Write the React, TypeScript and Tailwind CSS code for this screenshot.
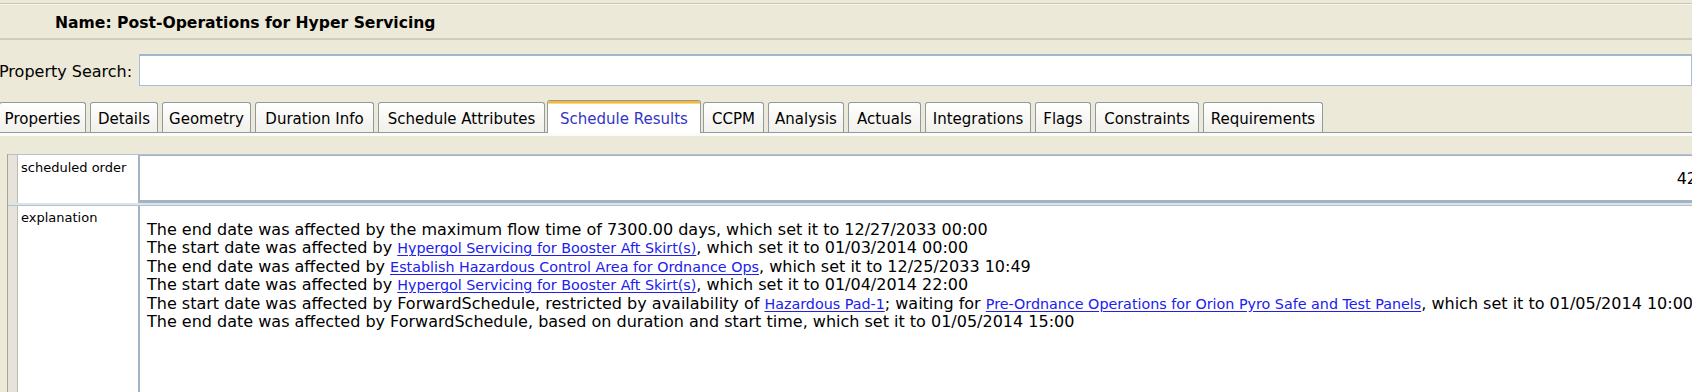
const tabs = [
  { label: "Properties", w: "w-[87px]" },
  { label: "Details", w: "w-[68px]" },
  { label: "Geometry", w: "w-[89px]" },
  { label: "Duration Info", w: "w-[119px]" },
  { label: "Schedule Attributes", w: "w-[167px]" },
  { label: "Schedule Results", w: "w-[154px]", active: true },
  { label: "CCPM", w: "w-[61px]" },
  { label: "Analysis", w: "w-[76px]" },
  { label: "Actuals", w: "w-[73px]" },
  { label: "Integrations", w: "w-[106px]" },
  { label: "Flags", w: "w-[56px]" },
  { label: "Constraints", w: "w-[104px]" },
  { label: "Requirements", w: "w-[120px]" },
]

function Link({ children }: { children: React.ReactNode }) {
  return <span className="text-[#2020ee] text-[14.3px] underline underline-offset-2">{children}</span>
}

function Tab({ label, w, active }: { label: string; w: string; active?: boolean }) {
  if (active) {
    return (
      <div
        className={`${w} -mx-[2px] h-[33px] -mb-[1px] relative z-10 flex flex-col bg-white border border-b-0 border-[#919b9c] rounded-t-[3px]`}
      >
        <div className="h-[3px] rounded-t-[2px] bg-[#f3b645] border-b border-[#ffd77a]" />
        <div className="flex-1 flex items-center justify-center pt-[2px] text-[#3434c8]">{label}</div>
      </div>
    )
  }
  return (
    <div
      className={`${w} h-[30px] flex items-center justify-center pt-[4px] bg-gradient-to-b from-white to-[#f1f0ea] border border-b-0 border-[#919b9c] rounded-t-[3px]`}
    >
      {label}
    </div>
  )
}

export default function App() {
  return (
    <div className="w-[1692px] h-[392px] overflow-hidden bg-[#ece9d8] text-black font-['DejaVu_Sans',sans-serif] text-[15px]">
      {/* title */}
      <div className="pt-[3px]">
        <div className="h-[37px] border-t border-[#c9c6b6] border-b-2 border-b-[#cfccbd] shadow-[inset_0_1px_0_#f6f5ef] flex items-center pl-[55px] pt-[6px] font-bold text-[15.6px]">
          Name: Post-Operations for Hyper Servicing
        </div>
      </div>

      {/* search */}
      <div className="mt-[14px] h-[32px] flex items-center">
        <span className="w-[140px] shrink-0 -ml-[1px] pt-[3px] text-[16px]">Property Search:</span>
        <div className="flex-1 h-full bg-white border border-[#a9bdd2] border-t-2 border-t-[#9fb6cd]" />
      </div>

      {/* tabs */}
      <div className="mt-[16px] flex items-end gap-[4px] h-[31px] border-b border-[#919b9c] -ml-[1px]">
        {tabs.map((t) => (
          <Tab key={t.label} {...t} />
        ))}
      </div>
      <div className="h-[3px] bg-[#fbfbf8]" />

      {/* property table */}
      <div className="mt-[18px] ml-[7px] w-[1700px] border-l border-[#a7a59a]">
        <div className="flex h-[49px] border-t border-[#b4c2d0]">
          <div className="w-[10px] shrink-0 bg-[#e6e4da] border-r border-[#bdbbb0]" />
          <div className="w-[120px] shrink-0 bg-white text-[13px] pl-[3px] pt-[5px] leading-[16px]">scheduled order</div>
          <div className="flex-1 bg-white border-l-2 border-t border-b-[3px] border-[#a4b3c4] flex items-center justify-end pr-[10px] pt-[2px] text-[16px]">
            42
          </div>
        </div>
        <div className="h-[2px] bg-[#dde3ea]" />
        <div className="flex h-[190px] border-t border-[#b4c2d0]">
          <div className="w-[10px] shrink-0 bg-[#e6e4da] border-r border-[#bdbbb0]" />
          <div className="w-[120px] shrink-0 bg-white text-[13px] pl-[3px] pt-[4px] leading-[16px]">explanation</div>
          <div className="flex-1 bg-white border-l-2 border-[#a4b3c4] pl-[7px] pt-[15px] text-[16px] leading-[18.4px] whitespace-nowrap">
            <div>The end date was affected by the maximum flow time of 7300.00 days, which set it to 12/27/2033 00:00</div>
            <div>
              The start date was affected by <Link>Hypergol Servicing for Booster Aft Skirt(s)</Link>, which set it to 01/03/2014 00:00
            </div>
            <div>
              The end date was affected by <Link>Establish Hazardous Control Area for Ordnance Ops</Link>, which set it to 12/25/2033 10:49
            </div>
            <div>
              The start date was affected by <Link>Hypergol Servicing for Booster Aft Skirt(s)</Link>, which set it to 01/04/2014 22:00
            </div>
            <div>
              The start date was affected by ForwardSchedule, restricted by availability of <Link>Hazardous Pad-1</Link>; waiting for{" "}
              <Link>Pre-Ordnance Operations for Orion Pyro Safe and Test Panels</Link>, which set it to 01/05/2014 10:00
            </div>
            <div>The end date was affected by ForwardSchedule, based on duration and start time, which set it to 01/05/2014 15:00</div>
          </div>
        </div>
      </div>
    </div>
  )
}
